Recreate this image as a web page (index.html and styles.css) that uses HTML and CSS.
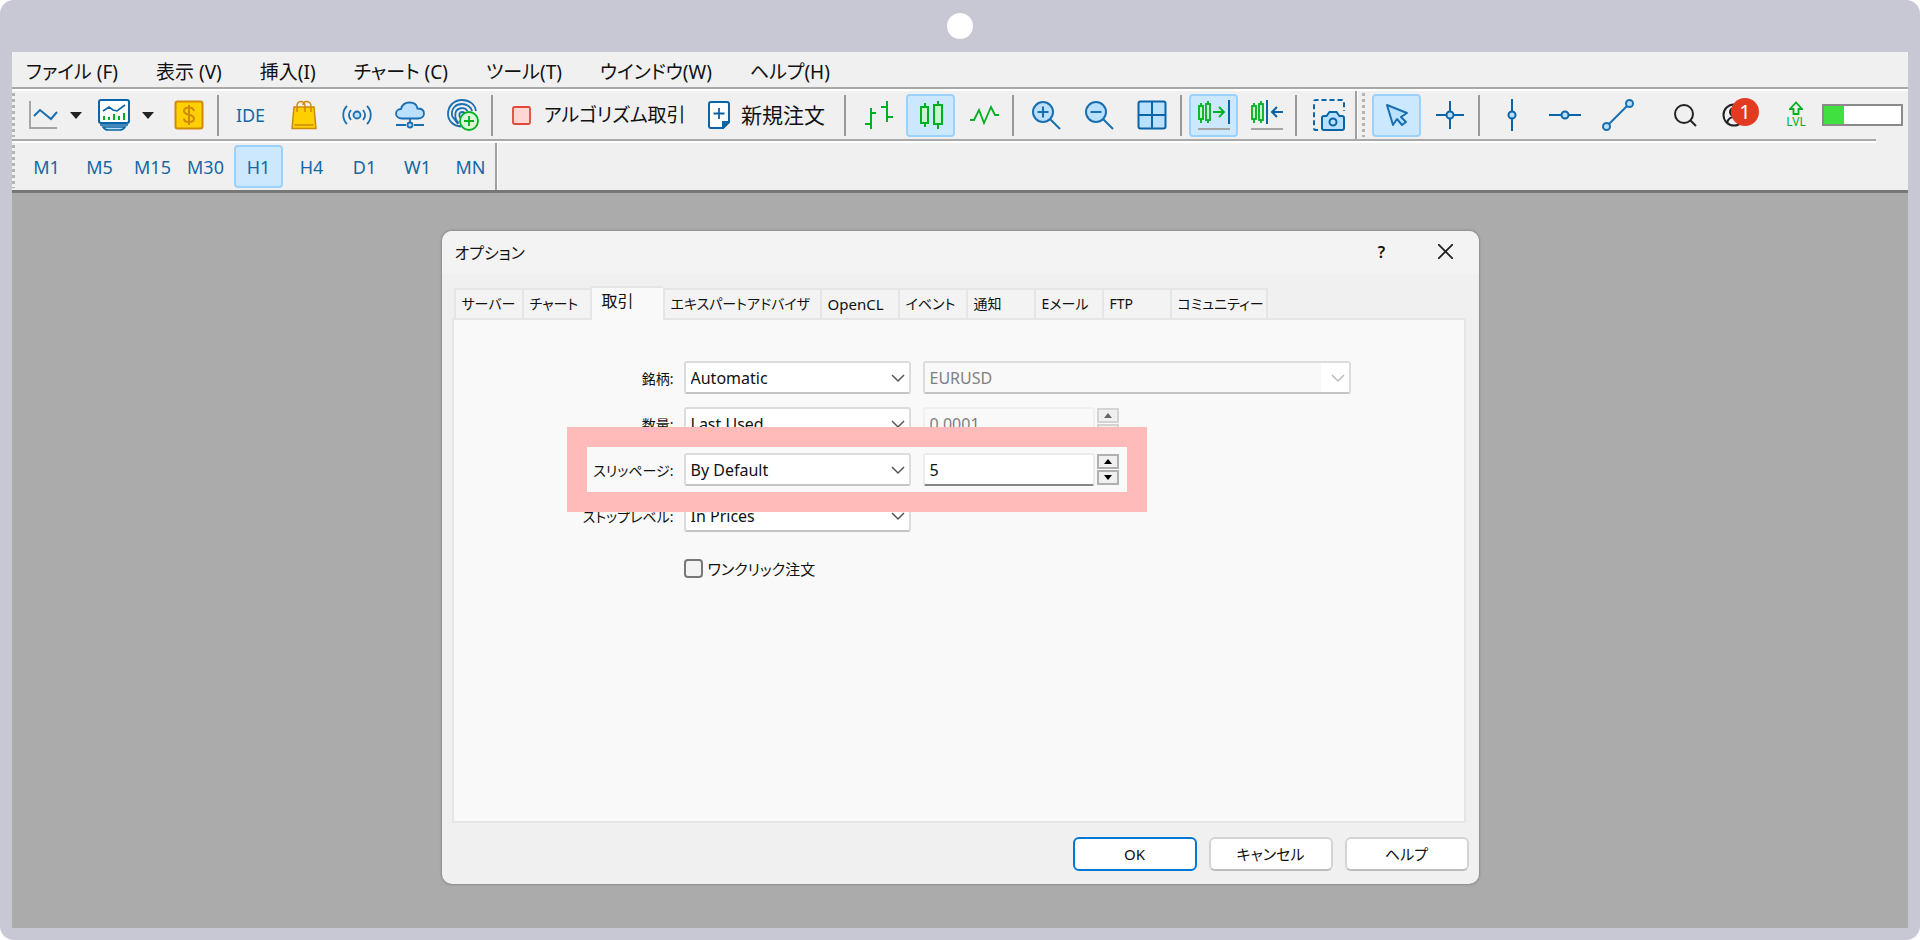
FILE: index.html
```html
<!DOCTYPE html>
<html lang="ja">
<head>
<meta charset="utf-8">
<meta name="viewport" content="width=device-width, initial-scale=1">
<title>オプション</title>
<link rel="stylesheet" href="styles.css">
</head>
<body>
<div class="frame">
  <div class="frame-top"><span class="camera-dot"></span></div>
  <div class="app">
    <nav class="menubar" aria-label="メニュー">
      <button class="menu-item">ファイル (F)</button>
      <button class="menu-item">表示 (V)</button>
      <button class="menu-item">挿入(I)</button>
      <button class="menu-item">チャート (C)</button>
      <button class="menu-item">ツール(T)</button>
      <button class="menu-item">ウインドウ(W)</button>
      <button class="menu-item">ヘルプ(H)</button>
    </nav>

    <div class="toolbar" role="toolbar" aria-label="ツールバー">
      <span class="grip"></span>
      <button class="tool tool-drop" aria-label="チャート">
        <svg width="30" height="32" viewBox="0 0 30 32" fill="none"><path d="M2 2v27h27" stroke="#a6a6a6" stroke-width="2"/><path d="M6 17l6-6 11 9 6-7" stroke="#1a6fb0" stroke-width="2"/></svg>
        <svg width="12" height="8" viewBox="0 0 12 8"><path d="M0 1h12L6 8z" fill="#222"/></svg>
      </button>
      <button class="tool tool-drop" aria-label="プロファイル">
        <svg width="32" height="32" viewBox="0 0 32 32" fill="none" stroke="#0a64a8" stroke-width="2"><rect x="1" y="1" width="30" height="23" rx="2" fill="#fff"/><path d="M2 26h28M5 28c2 3 3 3 5 3h12c2 0 3 0 5-3z" fill="#b9e1ff" stroke-width="1.6"/><path d="M5 12l6-4 4 3 4 1 8-6" stroke-width="1.6"/><path d="M6 17v4M11 18v3M16 15v6M21 17v4M26 14v7" stroke="#00b020"/></svg>
        <svg width="12" height="8" viewBox="0 0 12 8"><path d="M0 1h12L6 8z" fill="#222"/></svg>
      </button>
      <button class="tool" aria-label="気配値">
        <svg width="30" height="30" viewBox="0 0 30 30" fill="none" stroke="#cf8a0b"><rect x="1.500" y="1.500" width="27" height="27" rx="2" fill="#ffcf00" stroke-width="2"/><path d="M20 11c-.5-2.500-2.500-3.500-5-3.500s-5 1-5 3.500c0 5 10 2.500 10 7.500 0 3-2.500 3.500-5 3.500s-5-1-5-3.500M15 5v20" stroke-width="2"/></svg>
      </button>
      <span class="sep"></span>
      <button class="tool tool-text">IDE</button>
      <button class="tool" aria-label="マーケット">
        <svg width="26" height="30" viewBox="0 0 26 30" fill="none" stroke="#cf8a0b" stroke-width="1.500"><path d="M3 7h20l2 21.500H1z" fill="#ffcf00"/><path d="M6 12V6c0-2.500 1.500-4.500 3.500-4.500S14 3 14 6v6M12 5c0-2 1.500-3.500 3.500-3.500S20 3 20 6v6M3.500 25h19"/></svg>
      </button>
      <button class="tool" aria-label="シグナル">
        <svg width="30" height="22" viewBox="0 0 30 22" fill="none" stroke="#1a6fb0" stroke-width="1.800"><circle cx="15" cy="11" r="3.500" fill="#b9e1ff"/><path d="M9 6c-2.500 3-2.500 7 0 10M21 6c2.500 3 2.500 7 0 10M5 2C0 7 0 15 5 20M25 2c5 5 5 13 0 18"/></svg>
      </button>
      <button class="tool" aria-label="VPS">
        <svg width="30" height="28" viewBox="0 0 30 28" fill="none" stroke="#1a6fb0" stroke-width="1.800"><path d="M7 17.500c-3.500 0-6-2-6-5 0-2.500 2-4.500 5-4.500C7 4 10 1.500 14.500 1.500S22 4 22.500 7.500c4 0 6.500 2 6.500 5s-2.500 5-6 5z" fill="#b9e1ff"/><path d="M15 17v4M1 24h10M19 24h10"/><circle cx="15" cy="24" r="2.500" fill="#b9e1ff"/></svg>
      </button>
      <button class="tool" aria-label="接続">
        <svg width="32" height="32" viewBox="0 0 32 32" fill="none" stroke="#1a6fb0" stroke-width="1.800"><path d="M14 27.500C6 27 1 21.500 1 15 1 7 7 1 15 1c7 0 13 4 14 11M5 17C4 9 9 5 15 5c5 0 9 3 10 7M12 24c-4-3-4-7-3.500-10 1-5 9-7 12-2M15 20c-4-2-3-7 0-7 2 0 3 1 3 3M5 17l6 8"/><circle cx="22" cy="22" r="9" fill="#d9f7d9" stroke="#00b020"/><path d="M22 17v10M17 22h10" stroke="#00b020"/></svg>
      </button>
      <span class="sep"></span>
      <button class="tool tool-wide tool-algo">
        <svg width="19" height="19" viewBox="0 0 19 19"><rect x="1" y="1" width="17" height="17" rx="1.500" fill="#ffd6d1" stroke="#e0483a" stroke-width="1.800"/></svg>
        <span>アルゴリズム取引</span>
      </button>
      <button class="tool tool-wide tool-order">
        <svg width="22" height="28" viewBox="0 0 22 28" fill="none" stroke="#0a64a8" stroke-width="2"><path d="M3 1h16c1.500 0 2 .5 2 2v18l-6 6H3c-1.500 0-2-.5-2-2V3c0-1.500.5-2 2-2z" fill="#fff"/><path d="M21 21l-6 6v-6z" fill="#0a64a8"/><path d="M11 7v11M5.500 12.500h11" stroke-width="1.800"/></svg>
        <span>新規注文</span>
      </button>
      <span class="sep"></span>
      <button class="tool" aria-label="バーチャート">
        <svg width="30" height="30" viewBox="0 0 30 30" fill="none" stroke="#00b020" stroke-width="2"><path d="M8 8v21M8 13h5M2 24h6M24 1v21M24 17h6M18 7h6"/></svg>
      </button>
      <button class="tool is-on" aria-label="ローソク足" aria-pressed="true">
        <svg width="24" height="28" viewBox="0 0 24 28" fill="#c9f5cf" stroke="#00b020" stroke-width="2"><path d="M6 2v24M19 0v28"/><rect x="2" y="6" width="7" height="16"/><rect x="15" y="4" width="8" height="19"/></svg>
      </button>
      <button class="tool" aria-label="ラインチャート">
        <svg width="30" height="20" viewBox="0 0 30 20" fill="none" stroke="#00b020" stroke-width="1.800"><path d="M1 15h4l5-10 5 13 7-16 4 8h4"/></svg>
      </button>
      <span class="sep"></span>
      <button class="tool" aria-label="拡大">
        <svg width="30" height="30" viewBox="0 0 30 30" fill="none" stroke="#1a6fb0" stroke-width="2"><circle cx="12" cy="12" r="10" fill="#b9e1ff"/><path d="M19 19l10 10M6.500 12h11M12 6.500v11"/></svg>
      </button>
      <button class="tool" aria-label="縮小">
        <svg width="30" height="30" viewBox="0 0 30 30" fill="none" stroke="#1a6fb0" stroke-width="2"><circle cx="12" cy="12" r="10" fill="#b9e1ff"/><path d="M19 19l10 10M6.500 12h11"/></svg>
      </button>
      <button class="tool" aria-label="タイル表示">
        <svg width="30" height="30" viewBox="0 0 30 30" fill="#b9e1ff" stroke="#0a64a8" stroke-width="2"><rect x="1.500" y="1.500" width="27" height="27" rx="2"/><path d="M15 2v26M2 15h26"/></svg>
      </button>
      <span class="sep"></span>
      <button class="tool is-on" aria-label="自動スクロール" aria-pressed="true">
        <svg width="32" height="30" viewBox="0 0 32 30" fill="none" stroke="#00b020" stroke-width="1.800"><path d="M3 3v20M10 1v22"/><rect x="1" y="6" width="4" height="13" fill="#c9f5cf"/><rect x="8" y="4" width="4" height="16" fill="#c9f5cf"/><path d="M15 12h11M21 7l5 5-5 5"/><path d="M31 0v24" stroke="#0a64a8" stroke-width="2"/><path d="M0 29h32" stroke="#a6a6a6" stroke-width="2"/></svg>
      </button>
      <button class="tool" aria-label="チャートシフト">
        <svg width="32" height="30" viewBox="0 0 32 30" fill="none" stroke="#00b020" stroke-width="1.800"><path d="M3 3v20M10 1v22"/><rect x="1" y="6" width="4" height="13" fill="#c9f5cf"/><rect x="8" y="4" width="4" height="16" fill="#c9f5cf"/><path d="M32 12H21M26 7l-5 5 5 5M16 0v24" stroke="#0a64a8" stroke-width="2"/><path d="M0 29h32" stroke="#a6a6a6" stroke-width="2"/></svg>
      </button>
      <span class="sep"></span>
      <button class="tool" aria-label="スクリーンショット">
        <svg width="32" height="32" viewBox="0 0 32 32" fill="none" stroke="#0a64a8" stroke-width="2"><path d="M5 31H3c-1.500 0-2-.5-2-2V3c0-1.500.5-2 2-2h26c1.500 0 2 .5 2 2v9" stroke-dasharray="5 3"/><path d="M9 19c0-1 .5-2 2-2h2.500l3-4h7l3 4H29c1.500 0 2 1 2 2v10c0 1.500-.5 2-2 2H11c-1.500 0-2-.5-2-2z" fill="#b9e1ff"/><circle cx="20" cy="23" r="3.500"/></svg>
      </button>
      <span class="edge"></span>
      <span class="grip"></span>
      <button class="tool is-on" aria-label="カーソル" aria-pressed="true">
        <svg width="22" height="24" viewBox="0 0 22 24" fill="#b9e1ff" stroke="#1a6fb0" stroke-width="2" stroke-linejoin="round"><path d="M1 2l6 20 4-6 5 6 4-3-5-5 6-4z"/></svg>
      </button>
      <button class="tool" aria-label="十字線">
        <svg width="28" height="28" viewBox="0 0 28 28" fill="#b9e1ff" stroke="#0a64a8" stroke-width="2"><path d="M14 0v28M0 14h28"/><circle cx="14" cy="14" r="3.500"/></svg>
      </button>
      <span class="sep"></span>
      <button class="tool" aria-label="垂直線">
        <svg width="32" height="32" viewBox="0 0 32 32" fill="#b9e1ff" stroke="#0a64a8" stroke-width="2"><path d="M16 0v32"/><circle cx="16" cy="16" r="3.500"/></svg>
      </button>
      <button class="tool" aria-label="水平線">
        <svg width="32" height="32" viewBox="0 0 32 32" fill="#b9e1ff" stroke="#0a64a8" stroke-width="2"><path d="M0 16h32"/><circle cx="16" cy="16" r="3.500"/></svg>
      </button>
      <button class="tool" aria-label="トレンドライン">
        <svg width="32" height="32" viewBox="0 0 32 32" fill="#b9e1ff" stroke="#1a6fb0" stroke-width="2"><path d="M5 27L27 5"/><circle cx="4.500" cy="27.500" r="3.500"/><circle cx="27.500" cy="4.500" r="3.500"/></svg>
      </button>
      <div class="status">
        <button class="tool" aria-label="検索">
          <svg width="24" height="24" viewBox="0 0 24 24" fill="none" stroke="#222" stroke-width="2"><circle cx="11" cy="11" r="9"/><path d="M17 17l6 6"/></svg>
        </button>
        <button class="tool tool-user" aria-label="通知 1件">
          <svg width="24" height="24" viewBox="0 0 24 24" fill="none" stroke="#222" stroke-width="2"><circle cx="12" cy="12" r="10.500"/><circle cx="12" cy="9" r="4"/><path d="M5 20c2-8 12-8 14 0"/></svg>
          <span class="badge">1</span>
        </button>
        <button class="level" aria-label="レベル">
          <svg width="14" height="14" viewBox="0 0 14 14" fill="none" stroke="#00b020" stroke-width="1.800"><path d="M4.500 13V8H1l6-6.500L13 8H9.500v5z"/></svg>
          <span>LVL</span>
        </button>
        <div class="meter" role="meter" aria-label="接続状態" aria-valuenow="26" aria-valuemin="0" aria-valuemax="100"><div class="meter-fill"></div></div>
      </div>
    </div>
    <div class="toolbar-line"></div>

    <div class="timeframes" role="toolbar" aria-label="時間足">
      <span class="grip"></span>
      <button class="tool tool-text">M1</button>
      <button class="tool tool-text">M5</button>
      <button class="tool tool-text">M15</button>
      <button class="tool tool-text">M30</button>
      <button class="tool tool-text is-on" aria-pressed="true">H1</button>
      <button class="tool tool-text">H4</button>
      <button class="tool tool-text">D1</button>
      <button class="tool tool-text">W1</button>
      <button class="tool tool-text">MN</button>
      <span class="edge"></span>
    </div>

    <main class="workspace">
      <section class="dialog" role="dialog" aria-labelledby="dialog-title">
        <header class="dialog-head">
          <h1 class="dialog-title" id="dialog-title">オプション</h1>
          <button class="head-button head-help">?</button>
          <button class="head-button" aria-label="閉じる"><svg width="15" height="15" viewBox="0 0 15 15" stroke="#222" stroke-width="1.800"><path d="M0 0l15 15M15 0L0 15"/></svg></button>
        </header>
        <div class="dialog-body">
          <div class="tabs" role="tablist">
            <button class="tab" role="tab">サーバー</button>
            <button class="tab" role="tab">チャート</button>
            <button class="tab is-active" role="tab" aria-selected="true">取引</button>
            <button class="tab tab-expert" role="tab">エキスパートアドバイザ</button>
            <button class="tab tab-opencl" role="tab">OpenCL</button>
            <button class="tab" role="tab">イベント</button>
            <button class="tab" role="tab">通知</button>
            <button class="tab" role="tab">Eメール</button>
            <button class="tab" role="tab">FTP</button>
            <button class="tab tab-community" role="tab">コミュニティー</button>
          </div>
          <div class="panel" role="tabpanel">
            <form class="form">
              <div class="row">
                <label class="label" for="symbol">銘柄:</label>
                <div class="combo"><select id="symbol"><option>Automatic</option></select><svg class="chevron" width="12" height="7" viewBox="0 0 12 7"><path d="M0 0l6 6 6-6"/></svg></div>
                <div class="combo combo-wide is-disabled"><select aria-label="銘柄名" disabled><option>EURUSD</option></select><svg class="chevron" width="12" height="7" viewBox="0 0 12 7"><path d="M0 0l6 6 6-6"/></svg></div>
              </div>
              <div class="row">
                <label class="label" for="volume">数量:</label>
                <div class="combo"><select id="volume"><option>Last Used</option></select><svg class="chevron" width="12" height="7" viewBox="0 0 12 7"><path d="M0 0l6 6 6-6"/></svg></div>
                <div class="spin is-disabled">
                  <input type="text" value="0.0001" aria-label="数量の値" disabled>
                  <div class="spin-buttons"><button type="button" disabled aria-label="増やす"><svg width="8" height="5" viewBox="0 0 8 5"><path d="M0 5l4-5 4 5z"/></svg></button><button type="button" disabled aria-label="減らす"><svg width="8" height="5" viewBox="0 0 8 5"><path d="M0 0l4 5 4-5z"/></svg></button></div>
                </div>
              </div>
              <div class="row row-marked">
                <label class="label" for="slippage">スリッページ:</label>
                <div class="combo"><select id="slippage"><option>By Default</option></select><svg class="chevron" width="12" height="7" viewBox="0 0 12 7"><path d="M0 0l6 6 6-6"/></svg></div>
                <div class="spin">
                  <input type="text" value="5" aria-label="スリッページの値">
                  <div class="spin-buttons"><button type="button" aria-label="増やす"><svg width="8" height="5" viewBox="0 0 8 5"><path d="M0 5l4-5 4 5z"/></svg></button><button type="button" aria-label="減らす"><svg width="8" height="5" viewBox="0 0 8 5"><path d="M0 0l4 5 4-5z"/></svg></button></div>
                </div>
                <span class="marker"></span>
              </div>
              <div class="row">
                <label class="label" for="stops">ストップレベル:</label>
                <div class="combo"><select id="stops"><option>In Prices</option></select><svg class="chevron" width="12" height="7" viewBox="0 0 12 7"><path d="M0 0l6 6 6-6"/></svg></div>
              </div>
              <div class="row row-check">
                <input class="check" type="checkbox" id="one-click"><label for="one-click">ワンクリック注文</label>
              </div>
            </form>
          </div>
        </div>
        <footer class="dialog-foot">
          <button class="button is-default">OK</button>
          <button class="button">キャンセル</button>
          <button class="button">ヘルプ</button>
        </footer>
      </section>
    </main>
  </div>
</div>
</body>
</html>
```
FILE: styles.css
```css
* { box-sizing: border-box; }

body {
  margin: 0;
  background: #fff;
  color: #111;
  font-family: "Noto Sans", "Noto Sans CJK JP", sans-serif;
  font-size: 16px;
  font-feature-settings: "palt";
}

button, select, input {
  margin: 0;
  padding: 0;
  border: 0;
  background: none;
  color: inherit;
  font: inherit;
  font-feature-settings: inherit;
}

svg { display: block; flex: none; }

.frame {
  display: flex;
  flex-direction: column;
  min-height: 100vh;
  padding: 0 12px 12px;
  border-radius: 14px;
  background: #c8c7d4;
}

.frame-top {
  display: flex;
  align-items: center;
  justify-content: center;
  height: 52px;
}

.camera-dot {
  width: 26px;
  height: 26px;
  border-radius: 50%;
  background: #fff;
}

.app {
  display: flex;
  flex: 1;
  flex-direction: column;
  background: #f0f0f0;
}

/* Menu */
.menubar {
  display: flex;
  align-items: center;
  gap: 38px;
  height: 39px;
  padding: 2px 14px 0;
  border-bottom: 2px solid #fff;
  box-shadow: inset 0 -2px #a8a8a8;
  font-size: 19px;
  line-height: 24px;
}

.menu-item { white-space: nowrap; }

/* Toolbars */
.toolbar, .timeframes {
  display: flex;
  align-items: center;
  gap: 4px;
  height: 48px;
}

.toolbar-line {
  height: 4px;
  margin-right: 32px;
  border-top: 2px solid #a8a8a8;
  border-bottom: 2px solid #fff;
}

.timeframes {
  height: 50px;
  border-bottom: 3px solid #777;
}

.grip {
  align-self: stretch;
  width: 3px;
  margin: 2px 3px 2px 0;
  background: repeating-linear-gradient(#b4b4b4 0 3px, #f0f0f0 3px 6px);
}

.tool {
  display: flex;
  flex: none;
  align-items: center;
  justify-content: center;
  width: 49px;
  height: 43px;
  border: 2px solid transparent;
  border-radius: 4px;
}

.tool.is-on {
  border-color: #9bd1fb;
  background: #cce8ff;
}

.tool-drop {
  gap: 12px;
  width: auto;
  padding: 0 4px;
}

.tool-text {
  color: #1567a6;
  font-size: 18px;
}

.tool-wide {
  justify-content: flex-start;
  padding: 0 10px;
  font-size: 19px;
  line-height: 28px;
  white-space: nowrap;
}

.tool-algo { gap: 13px; width: 190px; }
.tool-order { gap: 11px; width: 146px; padding-left: 12px; font-size: 21px; }

.sep {
  flex: none;
  width: 2px;
  height: 41px;
  margin-right: 3px;
  background: #999;
}

.edge {
  align-self: stretch;
  width: 3px;
  margin-left: -2px;
  border-left: 2px solid #a0a0a0;
  border-right: 1px solid #fff;
}

.timeframes .edge { margin-left: -4px; }

.status {
  display: flex;
  align-items: center;
  gap: 4px;
  margin-left: auto;
  padding-right: 5px;
}

.tool-user {
  position: relative;
  padding-right: 8px;
}

.badge {
  position: absolute;
  top: 2px;
  right: 1px;
  width: 28px;
  height: 28px;
  border-radius: 50%;
  background: #e23b22;
  color: #fff;
  font-size: 20px;
  line-height: 28px;
  text-align: center;
}

.level {
  display: flex;
  flex-direction: column;
  align-items: center;
  width: 44px;
  margin-left: 8px;
  color: #00b020;
  font-size: 12px;
  line-height: 14px;
}

.meter {
  width: 81px;
  height: 22px;
  border: 2px solid #8a8a8a;
  background: #fff;
}

.meter-fill {
  width: 26%;
  height: 100%;
  background: #40e040;
}

/* Dialog */
.workspace {
  display: flex;
  flex: 1;
  align-items: flex-start;
  justify-content: center;
  padding: 38px 24px 44px;
  background: #ababab;
}

.dialog {
  display: flex;
  flex-direction: column;
  width: 1037px;
  border-radius: 10px;
  background: #f0f0f0;
  box-shadow: 0 0 2px 1px #8c8c8c;
}

.dialog-head {
  display: flex;
  align-items: center;
  height: 43px;
  padding: 0 1px 2px 13px;
  border-radius: 10px 10px 0 0;
  background: #f3f3f3;
}

.dialog-title {
  margin: 0 auto 0 0;
  font-size: 16px;
  font-weight: 400;
}

.head-button {
  display: flex;
  align-items: center;
  justify-content: center;
  width: 64px;
  height: 40px;
}

.head-help { font-weight: 600; }

.dialog-body {
  display: flex;
  flex-direction: column;
  padding: 12px 13px 0 10px;
}

.tabs {
  display: flex;
  align-items: flex-end;
  padding-left: 2px;
}

.tab {
  min-width: 68px;
  height: 30px;
  padding: 0 0 0 6px;
  border: 2px solid #e6e6e6;
  border-width: 2px 0 0 2px;
  background: #f3f3f3;
  font-size: 14px;
  line-height: 24px;
  text-align: left;
  white-space: nowrap;
}

.tab:last-child { border-right-width: 2px; }

.tab.is-active {
  z-index: 1;
  width: 73px;
  height: 34px;
  margin-bottom: -2px;
  padding: 0 0 6px 10px;
  background: #f9f9f9;
  font-size: 16px;
}

.tab-expert { width: 157px; }
.tab-opencl { width: 78px; font-size: 15px; }
.tab-community { width: 98px; }

.panel {
  min-height: 505px;
  padding: 41px 24px 24px 113px;
  border: 2px solid #e6e6e6;
  background: #f9f9f9;
}

.form {
  display: flex;
  flex-direction: column;
  gap: 13px;
}

.row {
  display: flex;
  align-items: center;
  gap: 12px;
  height: 33px;
}

.label {
  width: 107px;
  margin-right: -2px;
  font-size: 14px;
  text-align: right;
  white-space: nowrap;
}

.combo {
  position: relative;
  width: 227px;
  height: 33px;
}

.combo-wide { width: 428px; }

.combo select {
  width: 100%;
  height: 100%;
  padding: 0 28px 0 5px;
  border: 2px solid #dcdcdc;
  border-bottom-color: #c4c4c4;
  border-radius: 3px;
  background: #fff;
  appearance: none;
}

.chevron {
  position: absolute;
  top: 14px;
  right: 7px;
  fill: none;
  stroke: #555;
  stroke-width: 1.5;
  overflow: visible;
  pointer-events: none;
}

.is-disabled select {
  box-shadow: inset -28px 0 #fff;
  background: #f9f9f9;
  color: #808080;
  opacity: 1;
}

.is-disabled .chevron { stroke: #bbb; }

.spin {
  display: flex;
  gap: 2px;
  height: 33px;
}

.spin input {
  width: 172px;
  padding: 0 5px;
  border: 2px solid #ececec;
  border-bottom-color: #868686;
  border-radius: 3px;
  background: #fff;
}

.spin.is-disabled input {
  border-color: #f0f0f0;
  background: #f9f9f9;
  color: #808080;
}

.spin-buttons {
  display: flex;
  flex-direction: column;
  gap: 1px;
  width: 22px;
  padding: 1px 0;
}

.spin-buttons button {
  display: flex;
  flex: 1;
  align-items: center;
  justify-content: center;
  border: 2px solid #b0b0b0;
  background: #f0f0f0;
}

.spin-buttons svg { fill: #000; }
.spin.is-disabled button { border-color: #d4d4d4; }
.spin.is-disabled svg { fill: #666; }

.row-marked { position: relative; }

.marker {
  position: absolute;
  z-index: 1;
  top: -26px;
  left: 0;
  width: 580px;
  height: 85px;
  border: 20px solid #ffbaba;
  pointer-events: none;
}

.row-check {
  gap: 5px;
  padding: 14px 0 0 117px;
  font-size: 15px;
}

.check {
  width: 19px;
  height: 19px;
  border: 2px solid #777;
  border-radius: 4px;
  background: #f3f3f3;
  appearance: none;
}

.dialog-foot {
  display: flex;
  justify-content: flex-end;
  gap: 12px;
  padding: 14px 10px 13px;
}

.button {
  width: 124px;
  height: 34px;
  border: 2px solid #d4d4d4;
  border-bottom-color: #bdbdbd;
  border-radius: 6px;
  background: #fff;
  font-size: 15px;
  line-height: 24px;
}

.button.is-default { border-color: #0078d4; }
```
